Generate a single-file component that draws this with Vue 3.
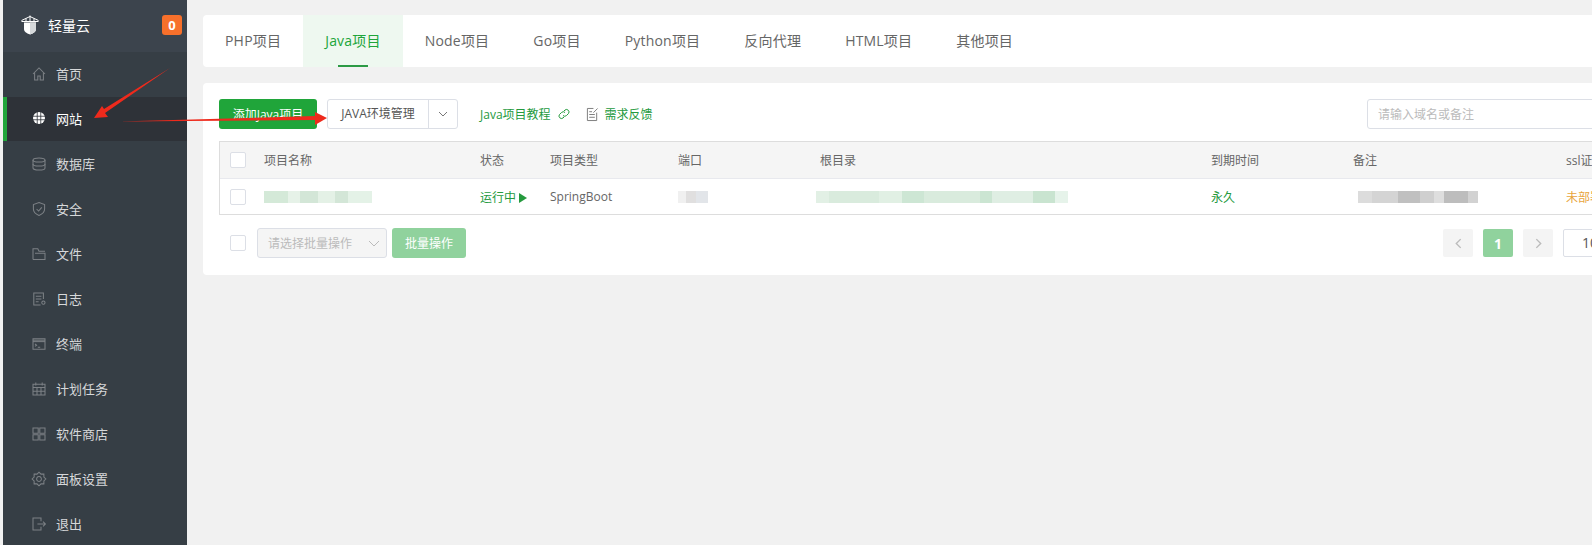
<script setup>
const tabs = ["PHP项目", "Java项目", "Node项目", "Go项目", "Python项目", "反向代理", "HTML项目", "其他项目"];

// gear outline for the settings icon, alternating outer and inner radius
function gearPath() {
	const pts = [];
	for (let i = 0; i < 16; i++) {
		const r = i % 2 ? 6.6 : 8.6;
		const a = (i * Math.PI) / 8;
		pts.push((10 + r * Math.cos(a)).toFixed(1) + " " + (10 + r * Math.sin(a)).toFixed(1));
	}
	return "M" + pts.join("L") + "z";
}

const menu = [
	{ name: "首页", paths: ["M2.5 10 10 2.5l7.5 7.500", "M4.5 8.500V17.500h4v-5h3v5h4V8.500"] },
	{ name: "网站", globe: true, active: true },
	{ name: "数据库", paths: ["M2.500 5c0-3.500 15-3.500 15 0v10c0 3.500-15 3.500-15 0z", "M2.500 5c0 3.500 15 3.500 15 0", "M2.500 10c0 3.500 15 3.500 15 0"] },
	{ name: "安全", paths: ["M10 2l7 2.500V10c0 4-3 6.500-7 8-4-1.500-7-4-7-8V4.500z", "M7 10l2.500 2.500L13.500 8"] },
	{ name: "文件", paths: ["M2.500 17V3.500h6l1.500 3h7.500", "M2.500 17h15V9H5"] },
	{ name: "日志", paths: ["M15.500 10V2.500h-12v15h8.500", "M6 6.500h7M6 10h7M6 13.500h3.500", "M15.500 12.500a2 2 0 1 0 .01 0"] },
	{ name: "终端", paths: ["M2.500 3.500h15v13h-15z", "M2.500 5.200h15", "M2.500 7h15", "M5 10l2 1.500L5 13M8.500 14h3"] },
	{ name: "计划任务", paths: ["M2.500 4h15v13.500h-15z", "M2.500 8h15M6 2v3.500M14 2v3.500", "M2.500 12.700h15M7.500 8v9.500M12.500 8v9.500"] },
	{ name: "软件商店", paths: ["M2.500 2.500h6.500v6.500H2.500zM11 2.500h6.500v6.500H11zM2.500 11h6.500v6.500H2.500zM11 11h6.500v6.500H11z"] },
	{ name: "面板设置", paths: [gearPath(), "M10 7a3 3 0 1 0 .01 0"] },
	{ name: "退出", paths: ["M12.500 6.500V2.500h-10v15h10v-4", "M8 10h10M15 7l3 3-3 3"] },
];

const columns = ["项目名称", "状态", "项目类型", "端口", "根目录", "到期时间", "备注", "ssl证书"];
</script>

<template>
	<div class="page">
		<aside class="sidebar">
			<div class="brand">
				<svg class="logo" viewBox="0 0 18 20" aria-hidden="true">
					<path d="M3 7.500h12v6.500c0 3-3 4.500-6 5.500-3-1-6-2.500-6-5.500z" fill="#fff" />
					<path d="M9 7.500h6v6.500c0 3-3 4.500-6 5.500z" fill="#d5d8da" />
					<path d="M.5 5.500 9 1.500l8.500 4M.5 6.500h17M5 3.500v3M13 3.500v3M9 .5v6" fill="none" stroke="#fff" />
				</svg>
				<span class="brand-name">轻量云</span>
				<span class="badge">0</span>
			</div>
			<nav>
				<a v-for="item in menu" :key="item.name" class="menu-item" :class="{ active: item.active }">
					<svg v-if="item.globe" class="menu-icon" viewBox="0 0 20 20" aria-hidden="true">
						<circle cx="10" cy="10" r="7.500" fill="#fff" />
						<path d="M2.500 7.800h15M2.500 12.200h15M7.800 2.500v15M12.200 2.500v15" stroke="#2e3238" fill="none" />
					</svg>
					<svg v-else class="menu-icon" viewBox="0 0 20 20" aria-hidden="true">
						<path v-for="d in item.paths" :key="d" :d="d" fill="none" stroke="#7c8085" stroke-width="1.300" />
					</svg>
					<span>{{ item.name }}</span>
				</a>
			</nav>
		</aside>

		<main class="content">
			<div class="tabs">
				<span v-for="tab in tabs" :key="tab" class="tab" :class="{ current: tab === 'Java项目' }">{{ tab }}</span>
			</div>

			<section class="card">
				<div class="toolbar">
					<button class="btn-add">添加Java项目</button>
					<div class="split">
						<span class="split-label">JAVA环境管理</span>
						<span class="split-arrow">
							<svg viewBox="0 0 10 6" width="10" height="6" aria-hidden="true">
								<path d="M1 1l4 4 4-4" fill="none" stroke="#777" />
							</svg>
						</span>
					</div>
					<a class="link tutorial">Java项目教程
						<svg viewBox="0 0 14 14" width="14" height="14" aria-hidden="true">
							<path d="M6 8.500a2.500 2.500 0 0 0 3.500 0l2-2A2.500 2.500 0 0 0 8 3L7 4M8 5.500a2.500 2.500 0 0 0-3.500 0l-2 2A2.500 2.500 0 0 0 6 11l1-1" fill="none" stroke="#259a3e" />
						</svg>
					</a>
					<a class="link feedback">
						<svg viewBox="0 0 14 16" width="13" height="15" aria-hidden="true">
							<path d="M8 1.500H1.500v13h10V6M3.500 8h6M3.500 11h6M3.500 5h3M8 6l4.500-4.500" fill="none" stroke="#777" />
						</svg>
						需求反馈
					</a>
					<input class="search" placeholder="请输入域名或备注" />
				</div>

				<div class="table">
					<div class="table-row table-head">
						<span class="check-cell"><i class="checkbox"></i></span>
						<span v-for="col in columns" :key="col">{{ col }}</span>
					</div>
					<div class="table-row table-body">
						<span class="check-cell"><i class="checkbox"></i></span>
						<span><i class="blur blur-name"></i></span>
						<span class="green">运行中 <b class="play"></b></span>
						<span>SpringBoot</span>
						<span><i class="blur blur-port"></i></span>
						<span><i class="blur blur-path"></i></span>
						<span class="green">永久</span>
						<span><i class="blur blur-note"></i></span>
						<span class="orange">未部署</span>
					</div>
				</div>

				<div class="footer">
					<i class="checkbox"></i>
					<div class="batch-select">
						<span>请选择批量操作</span>
						<svg viewBox="0 0 12 7" width="12" height="7" aria-hidden="true">
							<path d="M1 1l5 5 5-5" fill="none" stroke="#bbb" />
						</svg>
					</div>
					<button class="btn-batch">批量操作</button>
					<div class="pager">
						<span class="page-btn">
							<svg viewBox="0 0 8 12" width="7" height="11" aria-hidden="true"><path d="M6.500 1l-5 5 5 5" fill="none" stroke="#bbb" stroke-width="1.600" /></svg>
						</span>
						<span class="page-btn page-on">1</span>
						<span class="page-btn">
							<svg viewBox="0 0 8 12" width="7" height="11" aria-hidden="true"><path d="M1.500 1l5 5-5 5" fill="none" stroke="#bbb" stroke-width="1.600" /></svg>
						</span>
						<span class="page-size">10</span>
					</div>
				</div>
			</section>
		</main>

		<!-- red annotation arrows drawn over the screenshot -->
		<svg class="annotation" viewBox="0 0 1592 545" aria-hidden="true">
			<path d="M170 68 105 113 108 117 94 118 102 106 104 109z" fill="#ee2a1c" />
			<path d="M118 121.500 315 116 315 112 327 118 315 125 315 120z" fill="#ee2a1c" />
		</svg>
	</div>
</template>

<style scoped>
.page {
	position: relative;
	display: flex;
	width: 1592px;
	height: 545px;
	overflow: hidden;
	background: #f1f1f1;
	font-family: "Open Sans", "Noto Sans CJK SC", "Liberation Sans", sans-serif;
	font-size: 12px;
	color: #666;
}

.sidebar {
	flex: none;
	width: 184px;
	margin-left: 3px;
	background: #363e45;
	border-top-left-radius: 6px;
}
.brand {
	display: flex;
	align-items: center;
	height: 52px;
	padding: 0 5px 2px 18px;
	box-sizing: border-box;
	background: #3c444d;
	color: #fff;
}
.logo {
	width: 18px;
	height: 20px;
}
.brand-name {
	margin-left: 9px;
	font-size: 14px;
}
.badge {
	margin-left: auto;
	width: 20px;
	height: 20px;
	border-radius: 3px;
	background: #f7702b;
	font-size: 13px;
	font-weight: 700;
	line-height: 20px;
	text-align: center;
}
.menu-item {
	display: flex;
	align-items: center;
	height: 45px;
	padding: 0 0 2px 28px;
	box-sizing: border-box;
	font-size: 13px;
	color: #d6d8da;
}
.menu-item.active {
	height: 44px;
	margin-bottom: 1px;
	padding-left: 24px;
	border-left: 4px solid #20a53a;
	background: #2e3238;
	color: #fff;
}
.menu-icon {
	flex: none;
	width: 16px;
	height: 16px;
	margin-right: 9px;
}

.content {
	flex: none;
	width: 1405px;
	padding: 15px 0 0 16px;
	box-sizing: border-box;
}
.tabs {
	display: flex;
	height: 52px;
	border-radius: 4px 0 0 4px;
	background: #fff;
}
.tab {
	position: relative;
	padding: 0 22px;
	font-size: 14px;
	letter-spacing: 0.2px;
	line-height: 52px;
	color: #666;
}
.tab.current {
	background: #eef8f0;
	color: #20a53a;
}
.tab.current::after {
	content: "";
	position: absolute;
	left: 35px;
	bottom: 0;
	width: 30px;
	height: 2px;
	background: #2c9a45;
}

.card {
	height: 192px;
	margin-top: 16px;
	padding: 16px 0 0 16px;
	box-sizing: border-box;
	background: #fff;
	border-radius: 4px 0 0 4px;
}
.toolbar {
	display: flex;
	align-items: center;
	width: 1448px;
	height: 30px;
}
.btn-add {
	width: 98px;
	height: 30px;
	padding: 0;
	border: 0;
	border-radius: 3px;
	background: #20a53a;
	color: #fff;
	font: inherit;
}
.split {
	display: flex;
	height: 30px;
	margin-left: 10px;
	border: 1px solid #dcdfe6;
	border-radius: 3px;
	box-sizing: border-box;
	line-height: 28px;
}
.split-label {
	width: 100px;
	text-align: center;
	color: #555;
}
.split-arrow {
	display: flex;
	align-items: center;
	justify-content: center;
	width: 29px;
	box-sizing: border-box;
	border-left: 1px solid #dcdfe6;
}
.link {
	display: flex;
	align-items: center;
	gap: 6px;
	color: #259a3e;
}
.tutorial {
	margin-left: 22px;
}
.feedback {
	margin-left: 15px;
}
.search {
	width: 300px;
	height: 30px;
	margin-left: auto;
	padding: 0 10px;
	border: 1px solid #dcdfe6;
	border-radius: 3px;
	box-sizing: border-box;
	font: inherit;
}
.search::placeholder {
	color: #bbb;
}

.table {
	width: 1500px;
	margin-top: 12px;
	border: 1px solid #ddd;
	box-sizing: border-box;
}
.table-row {
	display: grid;
	grid-template-columns: 44px 216px 70px 128px 142px 391px 142px 213px 150px;
	align-items: center;
	height: 36px;
}
.table-head {
	border-bottom: 1px solid #e8e9ee;
	background: #f5f5f5;
}
.table-body {
	height: 35px;
}
.check-cell {
	display: flex;
	padding-left: 10px;
}
.checkbox {
	display: block;
	flex: none;
	width: 16px;
	height: 16px;
	border: 1px solid #dcdfe6;
	border-radius: 2px;
	box-sizing: border-box;
	background: #fff;
}
.green {
	color: #259a3e;
}
.orange {
	color: #e8a43c;
}
.play {
	display: inline-block;
	width: 0;
	height: 0;
	border-top: 5.5px solid transparent;
	border-bottom: 5.5px solid transparent;
	border-left: 8px solid #259a3e;
	vertical-align: -1px;
}
.blur {
	display: block;
	height: 12px;
}
.blur-name {
	width: 108px;
	background: linear-gradient(90deg, #d4e9d8 0 22%, #e6f2e8 22% 33%, #d3e6d7 33% 50%, #e4f1e6 50% 66%, #d3e6d7 66% 78%, #e4f2e7 78%);
}
.blur-port {
	width: 30px;
	background: linear-gradient(90deg, #f0f0f0 0 25%, #e0dfdf 25% 60%, #e2e5e9 60%);
}
.blur-path {
	width: 252px;
	margin-left: -4px;
	background: linear-gradient(90deg, #e2f0e5 0 5%, #d9ebdd 5% 25%, #e1f0e4 25% 34%, #cde6d4 34% 43%, #d9ebdd 43% 65%, #cbe5d2 65% 70%, #dfeee3 70% 86%, #c9e4d0 86% 95%, #e6f3ea 95%);
}
.blur-note {
	width: 120px;
	margin-left: 5px;
	background: linear-gradient(90deg, #dcdcdc 0 12%, #d4d4d4 12% 33%, #c0c0c0 33% 52%, #cfcfcf 52% 63%, #dedede 63% 72%, #bdbdbd 72% 92%, #d2d2d2 92%);
}

.footer {
	display: flex;
	align-items: center;
	width: 1404px;
	height: 30px;
	margin-top: 13px;
	padding-left: 11px;
	box-sizing: border-box;
}
.batch-select {
	display: flex;
	align-items: center;
	justify-content: space-between;
	width: 130px;
	height: 30px;
	margin-left: 11px;
	padding: 0 6px 0 10px;
	border: 1px solid #dcdfe6;
	border-radius: 3px;
	box-sizing: border-box;
	background: #f5f5f5;
	color: #bbb;
}
.btn-batch {
	width: 74px;
	height: 30px;
	margin-left: 5px;
	padding: 0;
	border: 0;
	border-radius: 3px;
	background: #90d29d;
	color: #fff;
	font: inherit;
}
.pager {
	display: flex;
	gap: 10px;
	margin-left: auto;
}
.page-btn {
	display: flex;
	align-items: center;
	justify-content: center;
	width: 30px;
	height: 28px;
	border-radius: 2px;
	background: #f4f4f4;
}
.page-on {
	background: #90d29d;
	color: #fff;
	font-size: 14px;
	font-weight: 700;
}
.page-size {
	width: 60px;
	height: 28px;
	padding-left: 18px;
	border: 1px solid #dcdfe6;
	border-radius: 2px;
	box-sizing: border-box;
	font-size: 14px;
	line-height: 26px;
	color: #555;
}

.annotation {
	position: absolute;
	inset: 0;
	width: 1592px;
	height: 545px;
	pointer-events: none;
}
</style>

<style>
html,
body {
	margin: 0;
	overflow: hidden;
}
</style>
